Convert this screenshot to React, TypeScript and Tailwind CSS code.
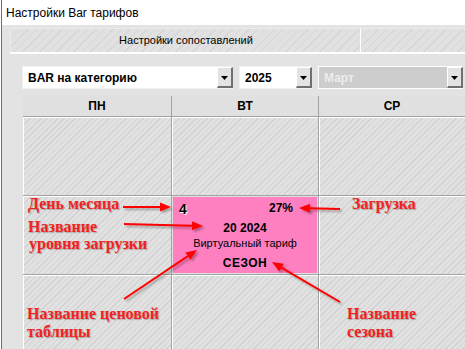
const hatch =
  "bg-[repeating-linear-gradient(135deg,#d2d2d2_0px,#d2d2d2_1px,#e1e1e1_1px,#e1e1e1_4px)]";

function Arrow({ x1, y1, x2, y2 }: { x1: number; y1: number; x2: number; y2: number }) {
  const a = Math.atan2(y2 - y1, x2 - x1);
  const len = 11;
  const w = 4.5;
  const bx = x2 - len * Math.cos(a);
  const by = y2 - len * Math.sin(a);
  const px = -Math.sin(a) * w;
  const py = Math.cos(a) * w;
  return (
    <g filter="url(#sh)">
      <line x1={x1} y1={y1} x2={bx} y2={by} stroke="#ff0000" strokeWidth={2} />
      <polygon
        points={`${x2},${y2} ${bx + px},${by + py} ${bx - px},${by - py}`}
        fill="#ff0000"
      />
    </g>
  );
}

function Combo({ text, width, disabled }: { text: string; width: string; disabled?: boolean }) {
  return (
    <div
      className={`flex h-[23px] items-center border ${width} ${
        disabled ? "border-white bg-[#cdcdcd]" : "border-[#f2f2f2] bg-white"
      }`}
    >
      <span
        className={`flex-1 pl-[5px] text-[12px] font-bold ${
          disabled ? "text-[#ececec]" : "text-black"
        }`}
      >
        {text}
      </span>
      <div className="mr-[-1px] flex h-[21px] w-[16px] items-center justify-center border-t border-l border-r-2 border-b-2 border-t-white border-l-white border-r-[#707070] border-b-[#707070] bg-[#e3e3e3]">
        <svg width="7" height="4" viewBox="0 0 7 4" className="mt-[2px]">
          <polygon points="0,0 7,0 3.5,4" fill="#000" />
        </svg>
      </div>
    </div>
  );
}

const label =
  "absolute whitespace-nowrap font-['Liberation_Serif',serif] text-[16px] font-bold leading-none text-[#f22222] [text-shadow:1px_1px_1px_rgba(0,0,0,0.25)]";

export default function App() {
  return (
    <div className="relative h-[349px] w-[465px] overflow-hidden bg-white pl-[1px] font-['Liberation_Sans',Arial,sans-serif]">
      <div className="flex h-full flex-col border-l border-[#6e6e6e] bg-[#e3e3e3]">
        <div className="flex h-[25px] items-center bg-white pl-[4px] text-[12px] text-black">
          Настройки Bar тарифов
        </div>

        <div className="mt-[3px] flex h-[24px] pl-[8px]">
          <div className="flex w-[351px] items-center justify-center border-t border-l border-r border-t-[#ececec] border-l-[#ececec] border-r-white bg-[repeating-linear-gradient(135deg,#d6d6d6_0px,#d6d6d6_1px,#e1e1e1_1px,#e1e1e1_6px)] pl-[1px] text-[11px] text-black">
            Настройки сопоставлений
          </div>
          <div className="flex-1 border-t border-[#ececec] bg-[repeating-linear-gradient(135deg,#d6d6d6_0px,#d6d6d6_1px,#e1e1e1_1px,#e1e1e1_6px)]" />
        </div>
        <div className="ml-[8px] h-[2px] bg-white" />

        <div className="mt-[12px] flex gap-[6px] pl-[20px]">
          <Combo text="BAR на категорию" width="w-[211px]" />
          <Combo text="2025" width="w-[73px]" />
          <Combo text="Март" width="w-[145px]" disabled />
        </div>

        <div className="mt-[7px] ml-[21px] grid grid-cols-[148px_146px_146px] grid-rows-[20px_78px_78px_74px] gap-[1px] bg-[#a3a3a3]">
          {["ПН", "ВТ", "СР"].map((d) => (
            <div
              key={d}
              className="flex items-center justify-center bg-[#e0e0e0] text-[12px] font-bold text-black"
            >
              {d}
            </div>
          ))}
          {Array.from({ length: 9 }).map((_, i) =>
            i === 4 ? (
              <div key={i} className="bg-[#e0e0e0] p-[1px]">
                <div className="relative flex h-full flex-col items-center bg-[#ff80c0] text-black">
                  <span className="absolute top-[5px] left-[6px] text-[14px] font-bold leading-none [text-shadow:1px_1px_0_#fff]">
                    4
                  </span>
                  <span className="absolute top-[5px] right-[24px] text-[12px] font-bold leading-none">
                    27%
                  </span>
                  <span className="mt-[25px] text-[12px] font-bold leading-none">20 2024</span>
                  <span className="mt-[4px] text-[11px] leading-none">Виртуальный тариф</span>
                  <span className="mt-[8px] text-[12px] font-bold leading-none tracking-[0.5px]">
                    СЕЗОН
                  </span>
                </div>
              </div>
            ) : (
              <div key={i} className={`border-t border-l border-white ${hatch}`} />
            )
          )}
        </div>
      </div>

      <div className={`${label} top-[196px] left-[28px]`}>День месяца</div>
      <div className={`${label} top-[219px] left-[28px]`}>Название</div>
      <div className={`${label} top-[236px] left-[29px]`}>уровня загрузки</div>
      <div className={`${label} top-[196px] left-[352px]`}>Загрузка</div>
      <div className={`${label} top-[306px] left-[27px]`}>Название ценовой</div>
      <div className={`${label} top-[324px] left-[27px]`}>таблицы</div>
      <div className={`${label} top-[306px] left-[347px]`}>Название</div>
      <div className={`${label} top-[324px] left-[347px]`}>сезона</div>

      <svg className="pointer-events-none absolute top-0 left-0" width="465" height="349">
        <defs>
          <filter id="sh" x="-20%" y="-20%" width="140%" height="140%">
            <feDropShadow dx="2" dy="2" stdDeviation="1" floodColor="#000" floodOpacity="0.3" />
          </filter>
        </defs>
        <Arrow x1={123} y1={207} x2={171} y2={207} />
        <Arrow x1={124} y1={224} x2={203} y2={226} />
        <Arrow x1={124} y1={299} x2={197} y2={250} />
        <Arrow x1={340} y1={209} x2={299} y2={208} />
        <Arrow x1={340} y1={302} x2={272} y2={262} />
      </svg>
    </div>
  );
}
